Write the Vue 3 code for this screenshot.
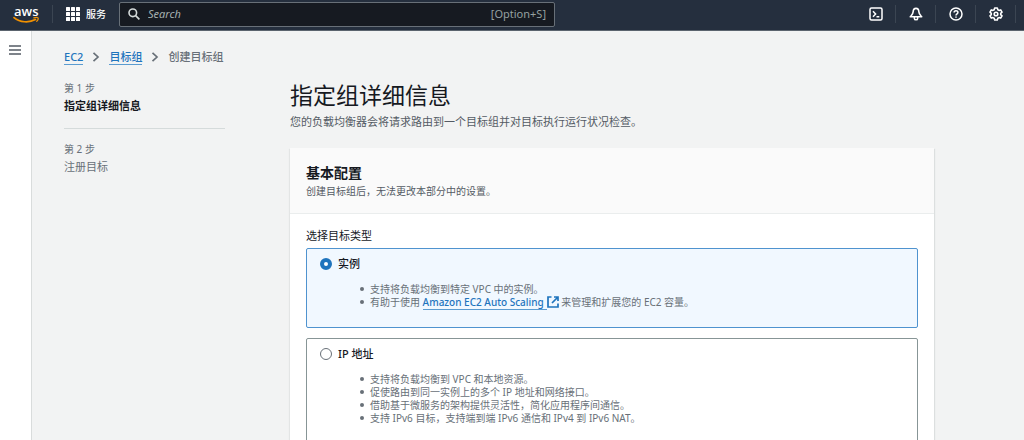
<script setup>
import { ref } from 'vue'

const targetType = ref('instance')
const query = ref('')

const steps = [
  { id: 1, label: '第 1 步', title: '指定组详细信息', active: true },
  { id: 2, label: '第 2 步', title: '注册目标', active: false }
]
</script>

<template>
  <div class="app">
    <header class="topbar">
      <a class="logo" href="#" aria-label="aws">
        <svg width="28" height="24" viewBox="0 0 28 24">
          <text x="1" y="14" class="logo-text">aws</text>
          <path d="M1 15.600C7 20.600 16 21 22.500 17.600" fill="none" stroke="#f29100" stroke-width="1.700" stroke-linecap="round" />
          <path d="M20.800 15.900c1.700-.6 3.700-.6 4.200-.1s-.2 2.300-1.300 3.500" fill="none" stroke="#f29100" stroke-width="1.200" stroke-linecap="round" />
        </svg>
      </a>
      <button class="services" type="button">
        <svg width="14" height="14" viewBox="0 0 14 14" fill="#fff">
          <template v-for="r in 3" :key="r">
            <rect v-for="c in 3" :key="c" :x="(c - 1) * 5" :y="(r - 1) * 5" width="4" height="4" rx="0.500" />
          </template>
        </svg>
        <span>服务</span>
      </button>
      <label class="search">
        <svg width="12" height="12" viewBox="0 0 12 12" fill="none" stroke="#d5dbdb" stroke-width="1.600">
          <circle cx="4.800" cy="4.800" r="3.800" />
          <path d="M7.600 7.600 11.400 11.400" />
        </svg>
        <input v-model="query" type="text" placeholder="Search" aria-label="Search" />
        <span class="hint">[Option+S]</span>
      </label>
      <nav class="tools">
        <button type="button" aria-label="CloudShell">
          <svg width="14" height="14" viewBox="0 0 14 14" fill="none" stroke="#fff" stroke-width="1.500">
            <rect x="1" y="1" width="12" height="12" rx="1.500" />
            <path d="M4 4.300 6.600 7 4 9.700M7.500 9.800H10.300" />
          </svg>
        </button>
        <button type="button" aria-label="通知">
          <svg width="14" height="14" viewBox="0 0 14 14" fill="none" stroke="#fff" stroke-width="1.600" stroke-linejoin="round">
            <path d="M7 1.400C4.900 1.400 4.200 3 4.100 5 4 7 3 7.800 1.300 9.800H12.700C11 7.800 10 7 9.900 5 9.800 3 9.100 1.400 7 1.400Z" />
            <path d="M5.400 9.800V11.400Q5.400 12.800 7 12.800T8.600 11.400V9.800" />
          </svg>
        </button>
        <button type="button" aria-label="帮助">
          <svg width="14" height="14" viewBox="0 0 14 14" fill="none" stroke="#fff" stroke-width="1.500">
            <circle cx="7" cy="7" r="6" />
            <path d="M5.100 5.600C5.100 3.200 8.900 3.200 8.900 5.500 8.900 6.900 7 6.700 7 8.500M7 9.500V10.800" />
          </svg>
        </button>
        <button type="button" aria-label="设置">
          <svg width="14" height="14" viewBox="0 0 14 14" fill="none" stroke="#fff" stroke-width="1.600" stroke-linejoin="round">
            <path d="M5.700 1H8.300L8.800 2.700 10 3.400 11.700 2.900 13 5.200 11.700 6.400V7.600L13 8.800 11.700 11.100 10 10.600 8.800 11.300 8.300 13H5.700L5.200 11.300 4 10.600 2.300 11.100 1 8.800 2.300 7.600V6.400L1 5.200 2.300 2.900 4 3.400 5.200 2.700Z" />
            <circle cx="7" cy="7" r="1.800" />
          </svg>
        </button>
      </nav>
    </header>

    <div class="body">
      <aside class="rail">
        <button type="button" aria-label="打开导航">
          <svg width="12" height="10" viewBox="0 0 12 10" stroke="#545b64" stroke-width="1.400">
            <path d="M0 1H12M0 5H12M0 9H12" />
          </svg>
        </button>
      </aside>

      <main class="page">
        <nav class="crumbs">
          <a href="#">EC2</a>
          <svg width="8" height="10" viewBox="0 0 8 10" fill="none" stroke="#687078" stroke-width="1.700"><path d="M1.500.8 6 5 1.500 9.200" /></svg>
          <a href="#">目标组</a>
          <svg width="8" height="10" viewBox="0 0 8 10" fill="none" stroke="#687078" stroke-width="1.700"><path d="M1.500.8 6 5 1.500 9.200" /></svg>
          <span>创建目标组</span>
        </nav>

        <div class="wizard">
          <ol class="steps">
            <li v-for="s in steps" :key="s.id" :class="{ active: s.active }">
              <small>{{ s.label }}</small>
              <span>{{ s.title }}</span>
            </li>
          </ol>

          <div class="content">
            <h1>指定组详细信息</h1>
            <p class="lead">您的负载均衡器会将请求路由到一个目标组并对目标执行运行状况检查。</p>

            <section class="card">
              <header class="card-head">
                <h2>基本配置</h2>
                <p>创建目标组后，无法更改本部分中的设置。</p>
              </header>
              <fieldset class="card-body">
                <legend>选择目标类型</legend>
                <div class="option" :class="{ selected: targetType === 'instance' }">
                  <label><input v-model="targetType" type="radio" name="target-type" value="instance" />实例</label>
                  <ul>
                    <li>支持将负载均衡到特定 VPC 中的实例。</li>
                    <li>有助于使用 <a href="#"><span>Amazon EC2 Auto Scaling</span><svg width="12" height="12" viewBox="0 0 12 12" fill="none" stroke="#1f74bd" stroke-width="1.700"><path d="M4.500 1H1V11H11V7.500M7 1H11V5M11 1 5 7" /></svg></a> 来管理和扩展您的 EC2 容量。</li>
                  </ul>
                </div>
                <div class="option" :class="{ selected: targetType === 'ip' }">
                  <label><input v-model="targetType" type="radio" name="target-type" value="ip" />IP 地址</label>
                  <ul>
                    <li>支持将负载均衡到 VPC 和本地资源。</li>
                    <li>促使路由到同一实例上的多个 IP 地址和网络接口。</li>
                    <li>借助基于微服务的架构提供灵活性，简化应用程序间通信。</li>
                    <li>支持 IPv6 目标，支持端到端 IPv6 通信和 IPv4 到 IPv6 NAT。</li>
                  </ul>
                </div>
              </fieldset>
            </section>
          </div>
        </div>
      </main>
    </div>
  </div>
</template>

<style>
body {
  margin: 0;
  background: #f2f3f3;
}
</style>

<style scoped>
* {
  box-sizing: border-box;
}
.app {
  display: flex;
  flex-direction: column;
  height: 100vh;
  overflow: hidden;
  background: #f2f3f3;
  color: #16191f;
  font-family: "Noto Sans", "Noto Sans CJK SC", sans-serif;
  font-size: 11px;
  line-height: 16px;
}
h1, h2, p, ul, ol {
  margin: 0;
  padding: 0;
}
button {
  border: 0;
  padding: 0;
  background: none;
  color: inherit;
  font: inherit;
}
svg {
  display: block;
  flex: none;
}

.topbar {
  display: flex;
  align-items: center;
  flex: none;
  height: 31px;
  padding: 0 8px 2px 13px;
  background: #252f3e;
  border-bottom: 1px solid #5b646e;
  color: #fff;
}
.logo {
  display: flex;
  align-items: center;
  height: 18px;
  padding-right: 11px;
  border-right: 1px solid #3b4552;
}
.logo svg {
  overflow: visible;
}
.logo-text {
  fill: #fff;
  font-family: "Open Sans", sans-serif;
  font-size: 13px;
  font-weight: 600;
}
.services {
  display: flex;
  align-items: center;
  gap: 6px;
  padding: 0 13px;
  font-size: 10px;
  font-weight: 500;
}
.search {
  display: flex;
  align-items: center;
  flex: 0 1 436px;
  height: 25px;
  padding: 0 8px;
  gap: 8px;
  border: 1px solid #687078;
  border-radius: 2px;
  background: #161a21;
}
.search input {
  flex: 1;
  min-width: 0;
  padding: 0;
  border: 0;
  outline: 0;
  background: none;
  color: #fff;
  font: inherit;
}
.search input::placeholder {
  color: #a5b0b0;
  font-style: italic;
  opacity: 1;
}
.hint {
  color: #95a0a0;
}
.tools {
  display: flex;
  margin-left: auto;
}
.tools button {
  display: grid;
  place-items: center;
  width: 40px;
  height: 18px;
  border-right: 1px solid #3b4552;
}

.body {
  display: flex;
  flex: 1;
  min-height: 0;
}
.rail {
  flex: none;
  width: 32px;
  padding: 12px 0 0 9px;
  background: #fff;
  border-right: 1px solid #d9dcdc;
}
.page {
  flex: 1;
  overflow: auto;
  scrollbar-width: none;
  padding: 18px 90px 0 32px;
}
.crumbs {
  display: flex;
  align-items: center;
  gap: 9px;
  color: #687078;
  font-weight: 500;
}
.crumbs a {
  border-bottom: 1px solid #5b9bd0;
  color: #1f74bd;
  line-height: 14px;
  text-decoration: none;
}
.wizard {
  display: flex;
  gap: 65px;
  padding-top: 15px;
}
.steps {
  flex: none;
  width: 161px;
  list-style: none;
}
.steps li {
  display: flex;
  flex-direction: column;
  gap: 2px;
  padding-bottom: 14px;
  color: #687078;
}
.steps li + li {
  padding-top: 12px;
  border-top: 1px solid #d5dbdb;
}
.steps small {
  font-size: 10px;
}
.steps .active span {
  color: #16191f;
  font-weight: 700;
}
.content {
  flex: 1;
  min-width: 0;
}
h1 {
  font-size: 23px;
  font-weight: 400;
  line-height: 30px;
}
.lead {
  margin-top: 4px;
  color: #545b64;
}
.card {
  margin-top: 18px;
  background: #fff;
  box-shadow: -1px 1px 1px #e3e5e5, 1px 1px 1px #dcdfdf;
}
.card-head {
  padding: 15px 16px 14px;
  background: #fafafa;
  border-bottom: 1px solid #eaeded;
}
h2 {
  font-size: 14px;
  font-weight: 700;
  line-height: 20px;
}
.card-head p {
  color: #545b64;
  font-size: 10px;
}
.card-body {
  display: flex;
  flex-direction: column;
  gap: 10px;
  min-width: 0;
  margin: 0;
  padding: 4px 16px 16px;
  border: 0;
}
legend {
  padding: 14px 0 0;
}
.option {
  padding: 7px 13px 18px;
  border: 1px solid #879596;
  border-radius: 2px;
}
.option.selected {
  border-color: #4f93cf;
  background: #f1f8ff;
}
.option label {
  display: flex;
  align-items: center;
  gap: 6px;
  font-weight: 500;
}
.option input {
  appearance: none;
  width: 12px;
  height: 12px;
  margin: 0;
  border: 1px solid #687078;
  border-radius: 50%;
  background: #fff;
}
.option input:checked {
  border: 4px solid #1f74bd;
}
.option ul {
  margin-top: 11px;
  padding-left: 50px;
  color: #687078;
  font-size: 10px;
  line-height: 13px;
  list-style: none;
}
.option li::before {
  content: "";
  display: inline-block;
  width: 4px;
  height: 4px;
  margin: 0 6px 2px -10px;
  border-radius: 50%;
  background: #687078;
}
.option a {
  color: #1f74bd;
  font-weight: 500;
  text-decoration: none;
}
.option a span {
  padding-right: 3px;
  border-bottom: 1px solid #5b9bd0;
}
.option a svg {
  display: inline-block;
  vertical-align: -2px;
}
</style>
